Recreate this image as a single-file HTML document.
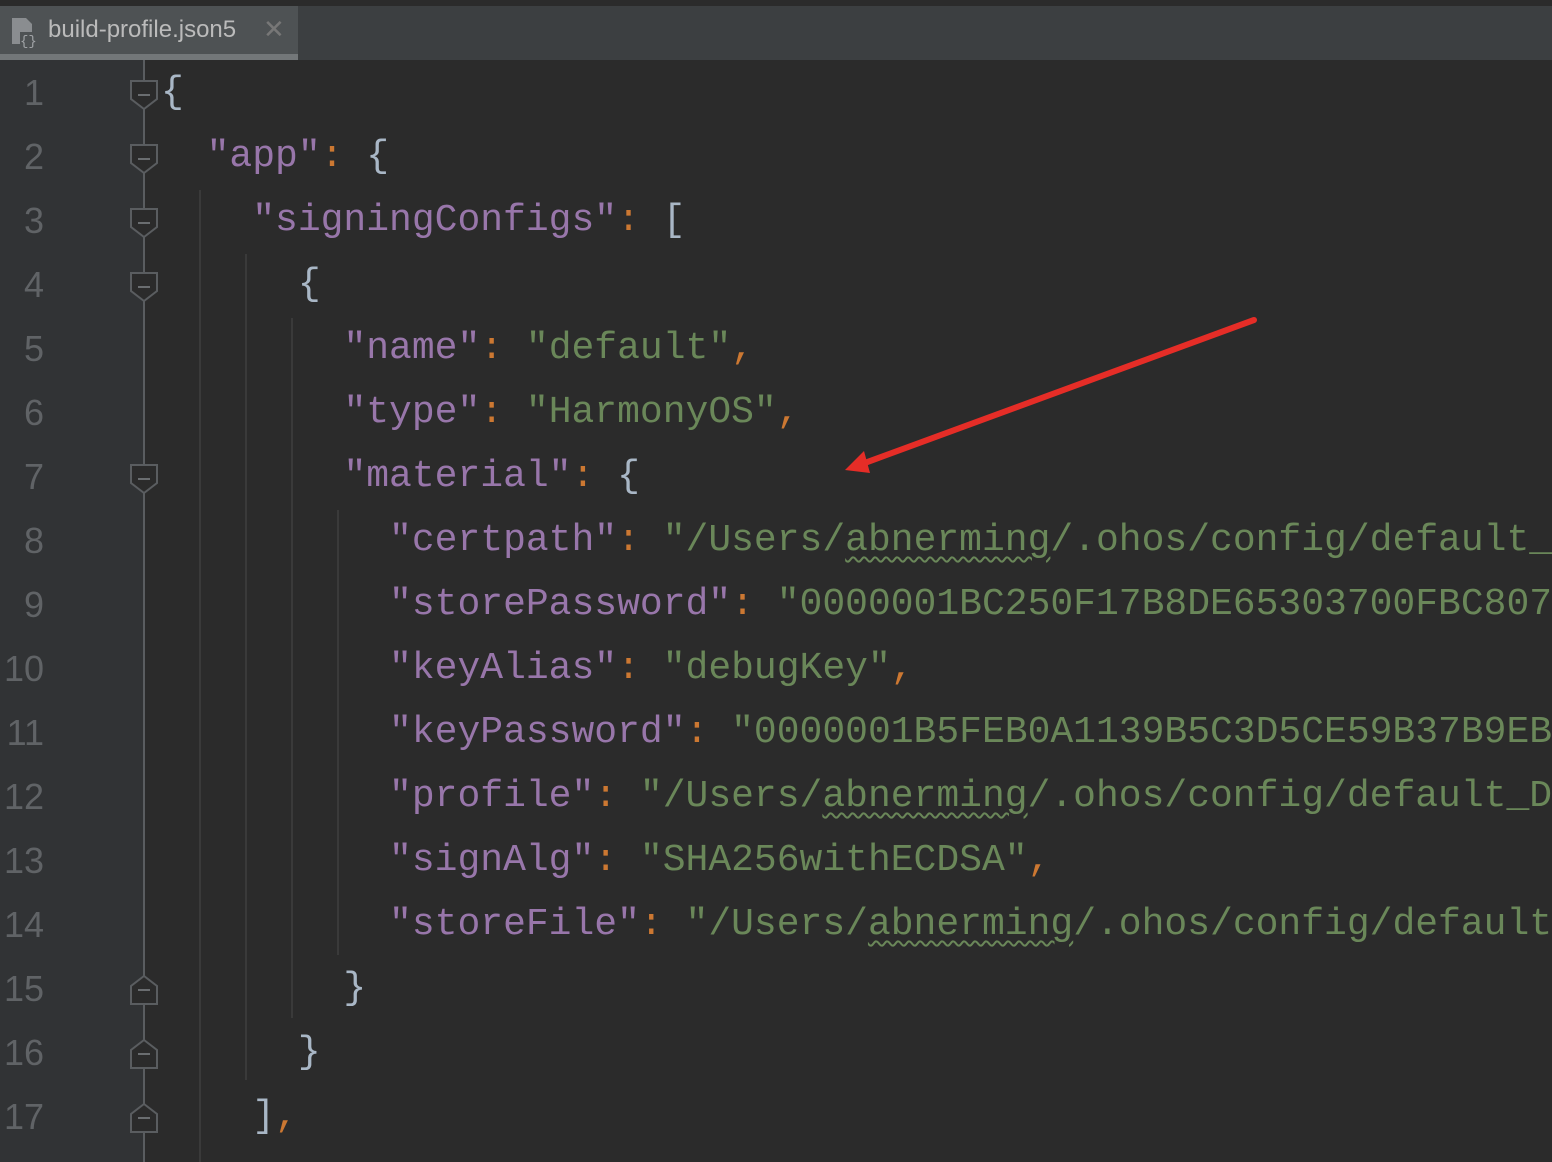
<!DOCTYPE html>
<html><head><meta charset="utf-8"><style>
html,body{margin:0;padding:0}
body{width:1552px;height:1162px;background:#2b2b2b;position:relative;overflow:hidden;font-family:"Liberation Mono",monospace}
.top{position:absolute;left:0;top:0;width:1552px;height:60px;background:#3c3f41;border-top:6px solid #2b2b2b;box-sizing:border-box}
.tab{position:absolute;left:0;top:6px;width:298px;height:54px;background:#4e5254;border-bottom:6px solid #737779;box-sizing:border-box;font-family:"Liberation Sans",sans-serif;font-size:24px;color:#bbbbbb}
.tab .t{position:absolute;left:48px;top:10px}
.tab .x{position:absolute;left:263px;top:8px;color:#777;font-size:26px}
.gutter{position:absolute;left:0;top:60px;width:144px;height:1102px;background:#313335}
.ln{position:absolute;left:0;width:44px;text-align:right;color:#606366;font-size:36px;line-height:64px;font-family:"Liberation Sans",sans-serif}
.clip{position:absolute;left:0;top:0;width:1552px;height:1162px;overflow:hidden}
.code{position:absolute;left:161px;font-size:38px;line-height:64px;white-space:pre;color:#a9b7c6}
.k{color:#9876aa}.s{color:#6a8759}.p{color:#cc7832}
.w{text-decoration:underline wavy #6a8759;text-underline-offset:6px;text-decoration-thickness:1.5px}
.g{position:absolute;width:2px;background:#3a3a3a}
</style></head><body>
<div class="top"></div>
<div class="tab">
<svg style="position:absolute;left:10px;top:10px" width="30" height="32" viewBox="0 0 30 32"><path d="M2 2h14l6 6v20H2z" fill="#8a8d90"/><rect x="10" y="16" width="18" height="15" fill="#4e5254"/><text x="10" y="29" font-size="14" font-family="Liberation Mono" fill="#a0a3a6">{}</text></svg>
<span class="t">build-profile.json5</span><span class="x">✕</span></div>
<div class="gutter"></div>
<svg style="position:absolute;left:0;top:60px" width="200" height="1102">
<line x1="144" y1="0" x2="144" y2="1102" stroke="#5a5d60" stroke-width="2"/>
<g fill="#2b2b2b" stroke="#5a5d60" stroke-width="2">
<path d="M131 21h26v18l-13 10l-13-10z"/><path d="M131 85h26v18l-13 10l-13-10z"/><path d="M131 149h26v18l-13 10l-13-10z"/><path d="M131 213h26v18l-13 10l-13-10z"/><path d="M131 405h26v18l-13 10l-13-10z"/>
<path d="M131 944h26v-18l-13-10l-13 10z"/><path d="M131 1008h26v-18l-13-10l-13 10z"/><path d="M131 1072h26v-18l-13-10l-13 10z"/>
</g>
<g stroke="#6a6d70" stroke-width="2"><line x1="138" y1="35" x2="150" y2="35"/><line x1="138" y1="99" x2="150" y2="99"/><line x1="138" y1="163" x2="150" y2="163"/><line x1="138" y1="227" x2="150" y2="227"/><line x1="138" y1="419" x2="150" y2="419"/><line x1="138" y1="930" x2="150" y2="930"/><line x1="138" y1="994" x2="150" y2="994"/><line x1="138" y1="1058" x2="150" y2="1058"/></g>
</svg>
<div class="g" style="left:199px;top:190px;height:972px"></div>
<div class="g" style="left:245px;top:254px;height:826px"></div>
<div class="g" style="left:291px;top:318px;height:700px"></div>
<div class="g" style="left:337px;top:510px;height:445px"></div>
<div class="ln" style="top:61px">1</div><div class="ln" style="top:125px">2</div><div class="ln" style="top:189px">3</div><div class="ln" style="top:253px">4</div><div class="ln" style="top:317px">5</div><div class="ln" style="top:381px">6</div><div class="ln" style="top:445px">7</div><div class="ln" style="top:509px">8</div><div class="ln" style="top:573px">9</div><div class="ln" style="top:637px">10</div><div class="ln" style="top:701px">11</div><div class="ln" style="top:765px">12</div><div class="ln" style="top:829px">13</div><div class="ln" style="top:893px">14</div><div class="ln" style="top:957px">15</div><div class="ln" style="top:1021px">16</div><div class="ln" style="top:1085px">17</div>
<div class="clip"><div class="code" style="top:61px">{
  <span class="k">"app"</span><span class="p">:</span> {
    <span class="k">"signingConfigs"</span><span class="p">:</span> [
      {
        <span class="k">"name"</span><span class="p">:</span> <span class="s">"default"</span><span class="p">,</span>
        <span class="k">"type"</span><span class="p">:</span> <span class="s">"HarmonyOS"</span><span class="p">,</span>
        <span class="k">"material"</span><span class="p">:</span> {
          <span class="k">"certpath"</span><span class="p">:</span> <span class="s">"/Users/<span class="w">abnerming</span>/.ohos/config/default_h</span>
          <span class="k">"storePassword"</span><span class="p">:</span> <span class="s">"0000001BC250F17B8DE65303700FBC807</span>
          <span class="k">"keyAlias"</span><span class="p">:</span> <span class="s">"debugKey"</span><span class="p">,</span>
          <span class="k">"keyPassword"</span><span class="p">:</span> <span class="s">"0000001B5FEB0A1139B5C3D5CE59B37B9EB</span>
          <span class="k">"profile"</span><span class="p">:</span> <span class="s">"/Users/<span class="w">abnerming</span>/.ohos/config/default_D</span>
          <span class="k">"signAlg"</span><span class="p">:</span> <span class="s">"SHA256withECDSA"</span><span class="p">,</span>
          <span class="k">"storeFile"</span><span class="p">:</span> <span class="s">"/Users/<span class="w">abnerming</span>/.ohos/config/default</span>
        }
      }
    ]<span class="p">,</span>
</div></div>
<svg style="position:absolute;left:0;top:0" width="1552" height="1162">
<line x1="1254" y1="320" x2="862" y2="464" stroke="#e52d27" stroke-width="6" stroke-linecap="round"/>
<path d="M845 470L864 451L870 473z" fill="#e52d27"/>
</svg>
</body></html>
